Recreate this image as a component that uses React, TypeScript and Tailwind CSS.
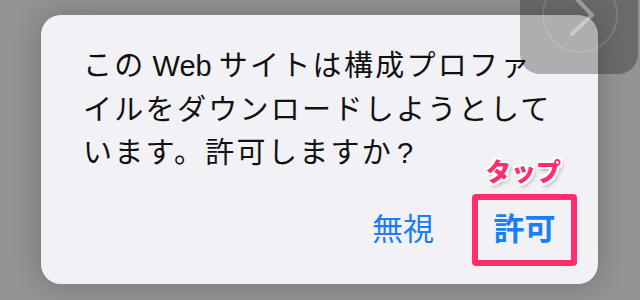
import React from "react";

const jp = { fontFamily: '"Liberation Sans", "Noto Sans CJK JP", sans-serif' };

function NextButton() {
  // translucent "next" tile sitting over the top right corner
  return (
    <div className="absolute left-[520px] top-[-30px] h-[104px] w-[118px] rounded-[20px] bg-[rgba(0,0,0,0.28)]">
      <svg width="118" height="104" viewBox="0 0 118 104" className="absolute left-0 top-0">
        <circle cx="60" cy="45" r="37" fill="none" stroke="rgba(255,255,255,0.13)" strokeWidth="2" />
        <path
          d="M53 25 L72 45 L52 64"
          fill="none"
          stroke="rgba(255,255,255,0.35)"
          strokeWidth="4"
          strokeLinecap="round"
          strokeLinejoin="round"
        />
      </svg>
    </div>
  );
}

export default function App() {
  return (
    <div className="relative h-[300px] w-[640px] overflow-hidden bg-[#939393] pl-[41px] pt-[15px]" style={jp}>
      <div className="flex h-[269px] w-[557px] flex-col rounded-[20px] bg-[#f2f1f6] shadow-[0_0_28px_rgba(0,0,0,0.22)]">
        <div className="pl-[42px] pt-[30px] text-[29px] leading-[43.5px] tracking-[2.3px] text-[#111]">
          <div className="whitespace-nowrap">
            この<span className="mx-[7px] tracking-normal">Web</span>サイトは構成プロファ
          </div>
          <div className="whitespace-nowrap">イルをダウンロードしようとして</div>
          <div className="whitespace-nowrap">
            います。許可しますか<span className="ml-[4px]">?</span>
          </div>
        </div>

        <div className="mt-[18px] flex items-center justify-end gap-[38px] pr-[21px]">
          <button className="text-[31px] leading-none text-[#1a7ff7]">無視</button>
          <div className="relative flex h-[72px] w-[105px] items-center justify-center rounded-[4px] border-[6px] border-[#ff2d6b]">
            <span className="text-[31px] font-bold leading-none text-[#1a7ff7]">許可</span>
            <span
              className="absolute left-[8px] top-[-40px] whitespace-nowrap text-[25px] font-black leading-none text-[#ff2d6b] [text-shadow:0_0_2px_#fff,2px_2px_0_#fff,-2px_-2px_0_#fff,2px_-2px_0_#fff,-2px_2px_0_#fff,0_2px_0_#fff,2px_3px_4px_rgba(0,0,0,0.35)]"
            >
              タップ
            </span>
          </div>
        </div>
      </div>
      <NextButton />
    </div>
  );
}
